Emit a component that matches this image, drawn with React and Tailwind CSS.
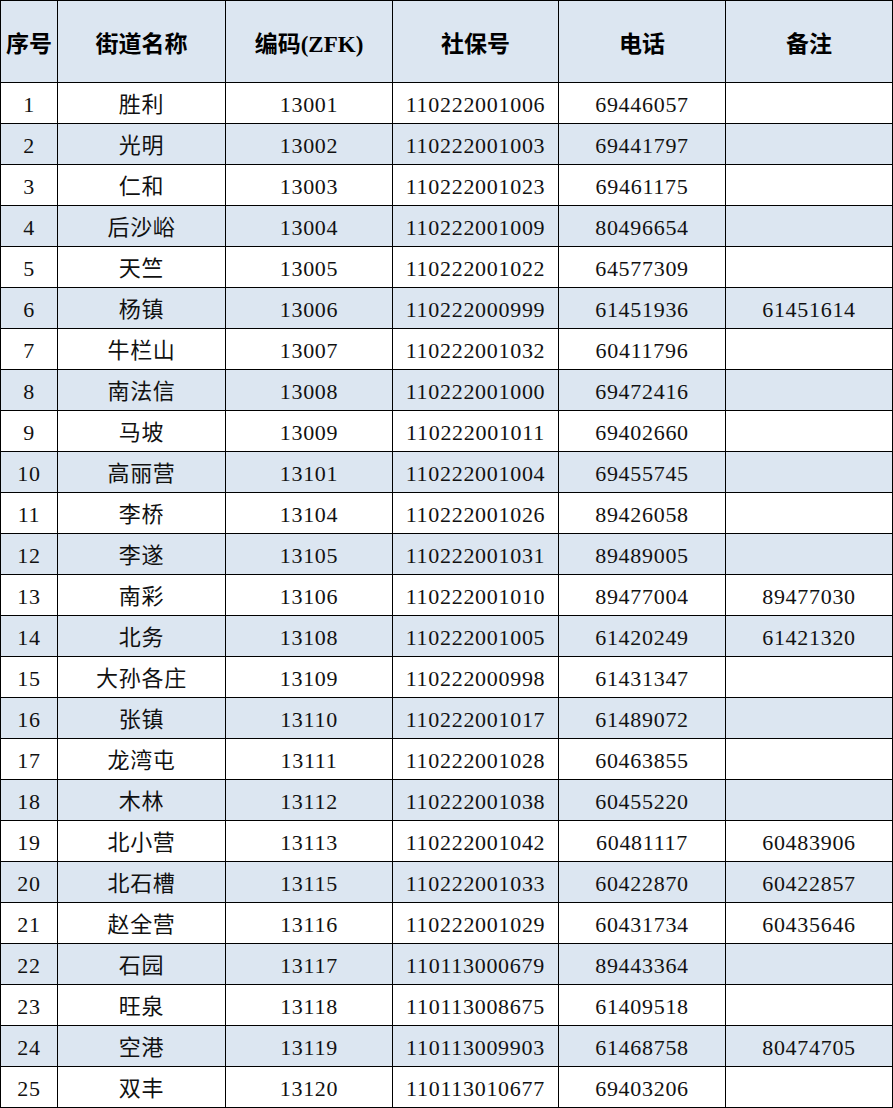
const ROWS = [
  ["1", "胜利", "13001", "110222001006", "69446057", ""],
  ["2", "光明", "13002", "110222001003", "69441797", ""],
  ["3", "仁和", "13003", "110222001023", "69461175", ""],
  ["4", "后沙峪", "13004", "110222001009", "80496654", ""],
  ["5", "天竺", "13005", "110222001022", "64577309", ""],
  ["6", "杨镇", "13006", "110222000999", "61451936", "61451614"],
  ["7", "牛栏山", "13007", "110222001032", "60411796", ""],
  ["8", "南法信", "13008", "110222001000", "69472416", ""],
  ["9", "马坡", "13009", "110222001011", "69402660", ""],
  ["10", "高丽营", "13101", "110222001004", "69455745", ""],
  ["11", "李桥", "13104", "110222001026", "89426058", ""],
  ["12", "李遂", "13105", "110222001031", "89489005", ""],
  ["13", "南彩", "13106", "110222001010", "89477004", "89477030"],
  ["14", "北务", "13108", "110222001005", "61420249", "61421320"],
  ["15", "大孙各庄", "13109", "110222000998", "61431347", ""],
  ["16", "张镇", "13110", "110222001017", "61489072", ""],
  ["17", "龙湾屯", "13111", "110222001028", "60463855", ""],
  ["18", "木林", "13112", "110222001038", "60455220", ""],
  ["19", "北小营", "13113", "110222001042", "60481117", "60483906"],
  ["20", "北石槽", "13115", "110222001033", "60422870", "60422857"],
  ["21", "赵全营", "13116", "110222001029", "60431734", "60435646"],
  ["22", "石园", "13117", "110113000679", "89443364", ""],
  ["23", "旺泉", "13118", "110113008675", "61409518", ""],
  ["24", "空港", "13119", "110113009903", "61468758", "80474705"],
  ["25", "双丰", "13120", "110113010677", "69403206", ""],
];

const HEADERS = ["序号", "街道名称", "编码(ZFK)", "社保号", "电话", "备注"];

export default function App() {
  return (
    <div
      className="w-[893px] h-[1108px] bg-white"
      style={{ fontFamily: '"Liberation Serif", "Noto Sans CJK SC", serif' }}
    >
      <div className="grid grid-cols-[56px_167px_166px_165px_166px_166px] grid-rows-[81px_repeat(25,40px)] gap-px bg-black p-px w-[893px]">
        {HEADERS.map((h) => (
          <div
            key={h}
            className="bg-[#dce6f1] flex items-center justify-center pt-[8px] text-[23px] font-bold text-black whitespace-nowrap"
          >
            {h}
          </div>
        ))}
        {ROWS.map((row, i) =>
          row.map((cell, j) => (
            <div
              key={i + "-" + j}
              className={
                (i % 2 === 1 ? "bg-[#dce6f1] " : "bg-white ") +
                "flex items-center justify-center pt-[2px] text-[22px] text-[#111] tracking-[0.7px] whitespace-nowrap"
              }
            >
              {cell}
            </div>
          ))
        )}
      </div>
    </div>
  );
}
